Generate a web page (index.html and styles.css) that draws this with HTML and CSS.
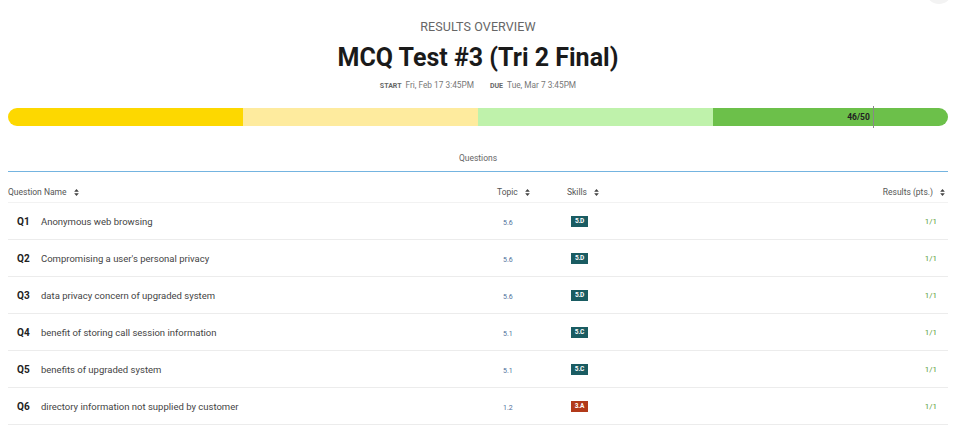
FILE: index.html
```html
<!DOCTYPE html>
<html>
<head>
<meta charset="utf-8">
<link rel="stylesheet" href="styles.css">
</head>
<body>
<div class="corner-btn"></div>
<div class="page">
  <header class="hero">
    <div class="eyebrow">RESULTS OVERVIEW</div>
    <h1 class="title">MCQ Test #3 (Tri 2 Final)</h1>
    <div class="dates">
      <span class="dlabel">START</span><span class="dval">Fri, Feb 17 3:45PM</span>
      <span class="dlabel due">DUE</span><span class="dval">Tue, Mar 7 3:45PM</span>
    </div>
  </header>

  <div class="bar">
    <div class="seg s1"></div>
    <div class="seg s2"></div>
    <div class="seg s3"></div>
    <div class="seg s4"></div>
    <div class="marker" style="left: 92%"><span class="score">46/50</span></div>
  </div>

  <div class="tabs"><span class="tab">Questions</span></div>

  <div class="table">
    <div class="row head">
      <div class="c-name">Question Name <svg class="sort" viewBox="0 0 6 9"><path d="M3 0 L6 3.5 H0 Z M3 9 L0 5.5 H6 Z"/></svg></div>
      <div class="c-topic">Topic <svg class="sort" viewBox="0 0 6 9"><path d="M3 0 L6 3.5 H0 Z M3 9 L0 5.5 H6 Z"/></svg></div>
      <div class="c-skill">Skills <svg class="sort" viewBox="0 0 6 9"><path d="M3 0 L6 3.5 H0 Z M3 9 L0 5.5 H6 Z"/></svg></div>
      <div class="c-res">Results (pts.) <svg class="sort" viewBox="0 0 6 9"><path d="M3 0 L6 3.5 H0 Z M3 9 L0 5.5 H6 Z"/></svg></div>
    </div>
    <div class="row">
      <div class="c-name"><span class="qn">Q1</span><span class="qt">Anonymous web browsing</span></div>
      <div class="c-topic"><span class="topic">5.6</span></div>
      <div class="c-skill"><span class="badge teal">5.D</span></div>
      <div class="c-res"><span class="pts">1/1</span></div>
    </div>
    <div class="row">
      <div class="c-name"><span class="qn">Q2</span><span class="qt">Compromising a user's personal privacy</span></div>
      <div class="c-topic"><span class="topic">5.6</span></div>
      <div class="c-skill"><span class="badge teal">5.D</span></div>
      <div class="c-res"><span class="pts">1/1</span></div>
    </div>
    <div class="row">
      <div class="c-name"><span class="qn">Q3</span><span class="qt">data privacy concern of upgraded system</span></div>
      <div class="c-topic"><span class="topic">5.6</span></div>
      <div class="c-skill"><span class="badge teal">5.D</span></div>
      <div class="c-res"><span class="pts">1/1</span></div>
    </div>
    <div class="row">
      <div class="c-name"><span class="qn">Q4</span><span class="qt">benefit of storing call session information</span></div>
      <div class="c-topic"><span class="topic">5.1</span></div>
      <div class="c-skill"><span class="badge teal">5.C</span></div>
      <div class="c-res"><span class="pts">1/1</span></div>
    </div>
    <div class="row">
      <div class="c-name"><span class="qn">Q5</span><span class="qt">benefits of upgraded system</span></div>
      <div class="c-topic"><span class="topic">5.1</span></div>
      <div class="c-skill"><span class="badge teal">5.C</span></div>
      <div class="c-res"><span class="pts">1/1</span></div>
    </div>
    <div class="row">
      <div class="c-name"><span class="qn">Q6</span><span class="qt">directory information not supplied by customer</span></div>
      <div class="c-topic"><span class="topic">1.2</span></div>
      <div class="c-skill"><span class="badge rust">3.A</span></div>
      <div class="c-res"><span class="pts">1/1</span></div>
    </div>
  </div>
</div>
</body>
</html>
```

FILE: styles.css
```css
* { box-sizing: border-box; }
html, body { margin: 0; padding: 0; background: #fff; }
body {
  font-family: Roboto, "Liberation Sans", sans-serif;
  color: #333;
  overflow: hidden;
}
.corner-btn {
  position: absolute;
  top: -22px;
  right: 6px;
  width: 26px;
  height: 26px;
  border-radius: 50%;
  background: #f3f3f3;
}
.page {
  width: 940px;
  margin-left: 8px;
}
.hero {
  display: flex;
  flex-direction: column;
  align-items: center;
  padding-top: 19px;
}
.eyebrow {
  font-size: 12.5px;
  color: #666;
  line-height: 15px;
  letter-spacing: 0.1px;
}
.title {
  margin: 10px 0 0;
  font-size: 25px;
  line-height: 28px;
  font-weight: 700;
  color: #1a1a1a;
}
.dates {
  margin-top: 7px;
  font-size: 8.3px;
  line-height: 12px;
  color: #777;
  display: flex;
  align-items: baseline;
}
.dlabel {
  font-size: 7px;
  font-weight: 700;
  color: #666;
  margin-right: 4px;
}
.dlabel.due { margin-left: 16px; }
.bar {
  position: relative;
  display: flex;
  height: 18px;
  margin-top: 16px;
  border-radius: 9px;
}
.seg { flex: 1; }
.s1 { background: #fdd800; border-radius: 9px 0 0 9px; }
.s2 { background: #feeb9e; }
.s3 { background: #bff2ab; }
.s4 { background: #6cc04a; border-radius: 0 9px 9px 0; }
.marker {
  position: absolute;
  top: -2px;
  bottom: -2px;
  width: 1px;
  background: #888;
}
.score {
  position: absolute;
  right: 4px;
  top: 6px;
  font-size: 8.5px;
  line-height: 10px;
  font-weight: 700;
  color: #222;
}
.tabs {
  margin-top: 25px;
  border-bottom: 1px solid #74b4e0;
  display: flex;
  justify-content: center;
  height: 21px;
}
.tab {
  font-size: 8.5px;
  color: #666;
  line-height: 12px;
  padding-top: 1px;
}
.row {
  display: grid;
  grid-template-columns: 489px 70px 1fr 120px;
  align-items: center;
  height: 37px;
  border-bottom: 1px solid #ececec;
}
.row > div { display: flex; align-items: center; height: 100%; }
.row.head {
  height: 31px;
  font-size: 8.5px;
  color: #555;
  border-bottom: 1px solid #f2f2f2;
}
.row.head > div { align-items: flex-start; padding-top: 15px; line-height: 11px; }
.row.head > div .sort { margin-top: 2px; }
.row.head .c-res { justify-content: flex-end; padding-right: 3px; }
.sort {
  width: 5px;
  height: 7px;
  margin-left: 7px;
  fill: #444;
}
.qn {
  font-size: 10px;
  font-weight: 700;
  color: #222;
  margin-left: 9px;
  width: 24px;
}
.qt {
  font-size: 9.5px;
  color: #444;
}
.topic {
  font-size: 7px;
  color: #4e6f9a;
  padding-left: 6px;
  padding-top: 3px;
}
.badge {
  margin-left: 4px;
  font-size: 6.5px;
  font-weight: 700;
  color: #fff;
  line-height: 11px;
  height: 11px;
  width: 17px;
  text-align: center;
  letter-spacing: -0.2px;
}
.teal { background: #1a5c62; }
.rust { background: #b23a1a; }
.row > .c-res { justify-content: flex-end; }
.pts {
  font-size: 8px;
  color: #5b9d3a;
  padding-right: 11px;
}
```
